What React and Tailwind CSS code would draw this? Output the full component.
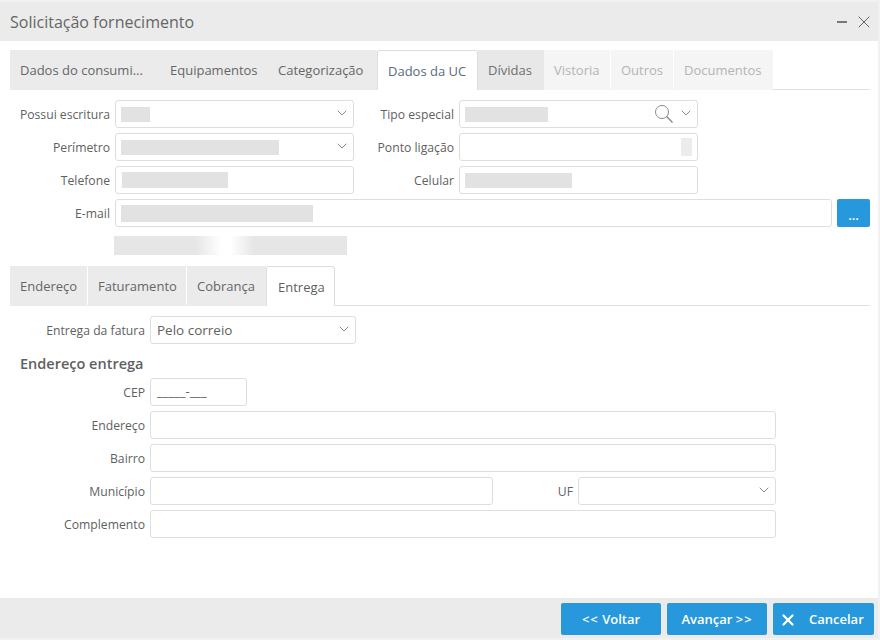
import { ChevronDown, X } from "lucide-react";

function Label({ children, className = "" }) {
  return <span className={`text-right text-[12.2px] text-[#5f5f5f] pr-[5px] pt-[2px] shrink-0 ${className}`}>{children}</span>;
}

function Field({ className = "", blur, blurClass = "", select, search, children }) {
  return (
    <div className={`relative h-[28px] shrink-0 flex items-center bg-white border border-[#dedede] rounded-[3px] pl-[5px] ${className}`}>
      {blur && <div className={`bg-[#e2e2e3] ${blurClass}`} />}
      {children}
      {search && (
        <svg className="absolute right-[24px] top-[4px] text-[#8a8a8a]" width="18" height="18" viewBox="0 0 18 18" fill="none" stroke="currentColor">
          <circle cx="7" cy="7" r="6.5" />
          <path d="M11.6 11.6 L17.5 17.5" strokeWidth="1.4" />
        </svg>
      )}
      {select && <ChevronDown className="absolute right-[3px] top-[4px] text-[#8a8a8a]" size={16} strokeWidth={1.5} />}
    </div>
  );
}

function Tab({ children, active, disabled, dark, className = "" }) {
  let look = "bg-[#ebebeb] text-[#666666]";
  if (active) look = "bg-white text-[#5c6b78] border border-b-0 border-[#dedede] rounded-t-[3px]";
  if (disabled) look = "bg-[#f5f5f5] text-[#b4b4b4]";
  if (dark) look = "bg-[#e8e8e8] text-[#6e6e6e]";
  return <div className={`h-[40px] flex items-center pl-[10px] pt-[2px] text-[13px] shrink-0 whitespace-nowrap ${look} ${className}`}>{children}</div>;
}

function Btn({ children, className = "" }) {
  return (
    <div className={`flex items-center bg-[#2698db] text-white text-[13px] font-semibold rounded-[2px] ${className}`}>
      {children}
    </div>
  );
}

export default function App() {
  return (
    <div className="w-[880px] h-[640px] bg-[#f1f1f1] pt-[2px] pr-[2px] pb-[2px] overflow-hidden" style={{ fontFamily: '"Open Sans", sans-serif' }}>
      <div className="w-[878px] h-[636px] bg-white flex flex-col">
        {/* title bar */}
        <div className="h-[39px] shrink-0 bg-[#ebebeb] flex items-center pl-[10px] pr-[4px]">
          <span className="text-[16px] text-[#666666] flex-1">Solicitação fornecimento</span>
          <div className="w-[10px] h-[2px] bg-[#777777] mr-[7px]" />
          <X size={20} strokeWidth={1.2} className="text-[#666666]" />
        </div>

        <div className="flex-1 pl-[10px] pr-[8px] pt-[9px]">
          {/* main tabs */}
          <div className="w-[860px] flex border-b border-[#e3e3e3] h-[40px]">
            <Tab className="w-[150px]">Dados do consumi...</Tab>
            <Tab className="w-[108px]">Equipamentos</Tab>
            <Tab className="w-[109px]">Categorização</Tab>
            <Tab active className="w-[101px]">Dados da UC</Tab>
            <Tab dark className="w-[66px]">Dívidas</Tab>
            <Tab disabled className="w-[66px]">Vistoria</Tab>
            <Tab disabled className="w-[62px] ml-px">Outros</Tab>
            <Tab disabled className="w-[99px] ml-px">Documentos</Tab>
          </div>

          {/* consumer data */}
          <div className="mt-[10px] flex flex-col gap-[5px]">
            <div className="flex items-center">
              <Label className="w-[105px]">Possui escritura</Label>
              <Field select blur blurClass="w-[29px] h-[15px]" className="w-[239px]" />
              <Label className="w-[105px]">Tipo especial</Label>
              <Field select search blur blurClass="w-[83px] h-[15px]" className="w-[239px]" />
            </div>
            <div className="flex items-center">
              <Label className="w-[105px]">Perímetro</Label>
              <Field select blur blurClass="w-[158px] h-[15px]" className="w-[239px]" />
              <Label className="w-[105px]">Ponto ligação</Label>
              <Field className="w-[239px] justify-end pr-[5px]">
                <div className="w-[11px] h-[18px] bg-[#ececec]" />
              </Field>
            </div>
            <div className="flex items-center">
              <Label className="w-[105px]">Telefone</Label>
              <Field blur blurClass="w-[106px] h-[16px] ml-px" className="w-[239px]" />
              <Label className="w-[105px]">Celular</Label>
              <Field blur blurClass="w-[107px] h-[15px]" className="w-[239px]" />
            </div>
            <div className="flex items-center">
              <Label className="w-[105px]">E-mail</Label>
              <Field blur blurClass="w-[192px] h-[17px]" className="w-[717px]" />
              <Btn className="w-[33px] h-[28px] ml-[5px] justify-center"><span className="mt-[5px]">...</span></Btn>
            </div>
          </div>
          <div className="ml-[104px] mt-[9px] w-[233px] h-[19px] bg-[linear-gradient(90deg,#e6e6e6_0%,#e6e6e6_35%,#ffffff_46%,#ffffff_50%,#e6e6e6_60%,#e6e6e6_100%)]" />

          {/* address tabs */}
          <div className="w-[860px] flex gap-px border-b border-[#e3e3e3] h-[40px] mt-[11px]">
            <Tab className="w-[77px]">Endereço</Tab>
            <Tab className="w-[98px]">Faturamento</Tab>
            <Tab className="w-[79px]">Cobrança</Tab>
            <Tab active className="w-[69px] -ml-px pl-[11px] text-[#5f5f5f]">Entrega</Tab>
          </div>

          <div className="mt-[10px] flex items-center">
            <Label className="w-[140px]">Entrega da fatura</Label>
            <Field select className="w-[206px] pl-[6px]">
              <span className="text-[13.5px] text-[#5f5f5f]">Pelo correio</span>
            </Field>
          </div>
          <div className="mt-[9px] ml-[10px] h-[21px] text-[14.5px] font-semibold text-[#5f5f5f] leading-[21px]">Endereço entrega</div>

          <div className="mt-[4px] flex flex-col gap-[5px]">
            <div className="flex items-center">
              <Label className="w-[140px]">CEP</Label>
              <Field className="w-[97px]">
                <span className="text-[13px] text-[#5f5f5f] pl-px">_____-___</span>
              </Field>
            </div>
            <div className="flex items-center">
              <Label className="w-[140px]">Endereço</Label>
              <Field className="w-[626px]" />
            </div>
            <div className="flex items-center">
              <Label className="w-[140px]">Bairro</Label>
              <Field className="w-[626px]" />
            </div>
            <div className="flex items-center">
              <Label className="w-[140px]">Município</Label>
              <Field className="w-[343px]" />
              <Label className="w-[85px]">UF</Label>
              <Field select className="w-[198px]" />
            </div>
            <div className="flex items-center">
              <Label className="w-[140px]">Complemento</Label>
              <Field className="w-[626px]" />
            </div>
          </div>
        </div>

        {/* footer */}
        <div className="h-[40px] shrink-0 bg-[#ebebeb] flex justify-end items-start gap-[6px] pt-[5px] pr-[4px]">
          <Btn className="w-[100px] h-[32px] pt-[2px] justify-center"><span className="tracking-[1px]">&lt;&lt;</span>&nbsp;Voltar</Btn>
          <Btn className="w-[100px] h-[32px] pt-[2px] justify-center">Avançar&nbsp;<span className="tracking-[1px]">&gt;&gt;</span></Btn>
          <Btn className="w-[101px] h-[32px] pt-[2px] pl-[6px] gap-[12px]">
            <X size={18} strokeWidth={3} />
            Cancelar
          </Btn>
        </div>
      </div>
    </div>
  );
}
